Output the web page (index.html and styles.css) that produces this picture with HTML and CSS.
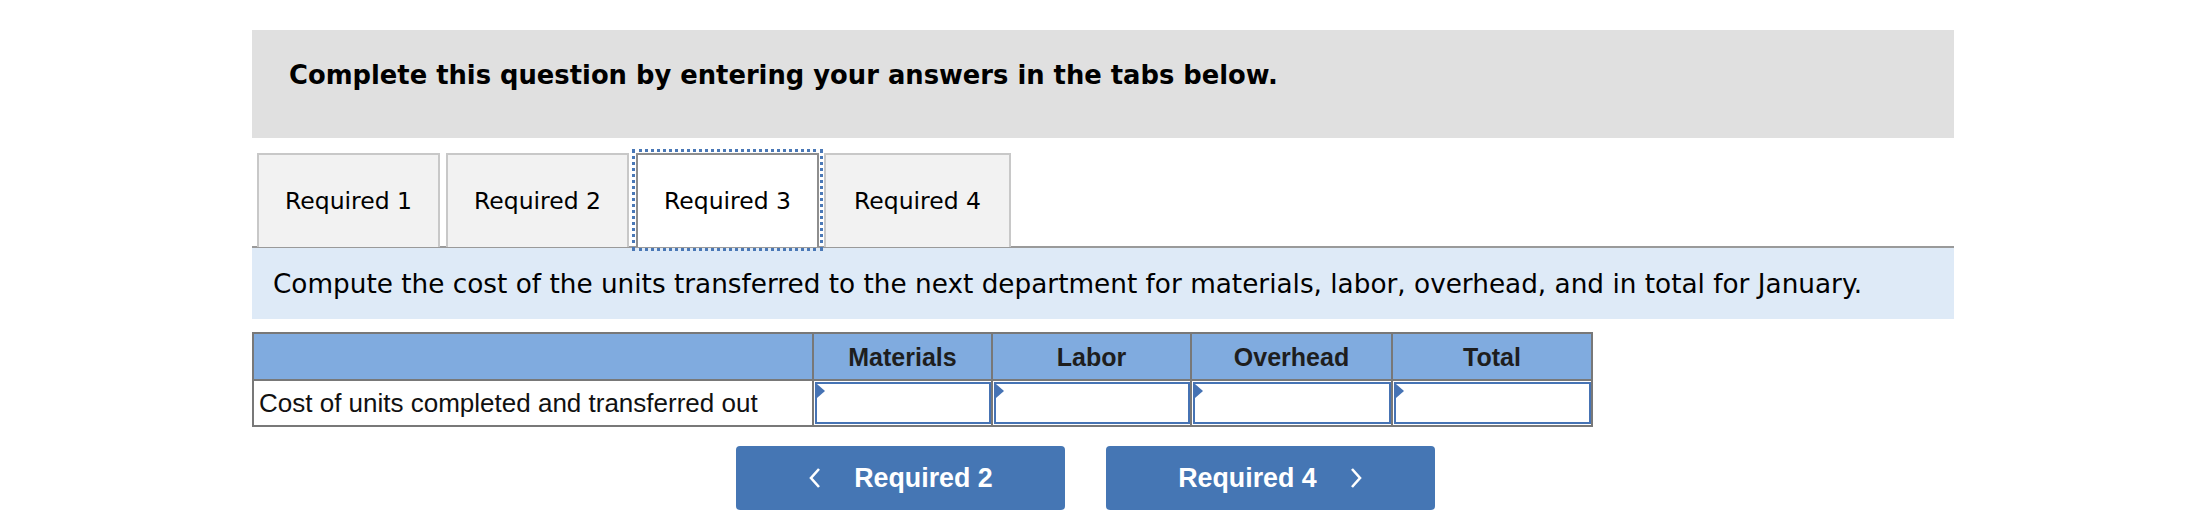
FILE: index.html
```html
<!DOCTYPE html>
<html>
<head>
<meta charset="utf-8">
<link rel="stylesheet" href="styles.css">
</head>
<body>
<div class="wrap">
  <div class="banner">
    <h1 class="banner-title">Complete this question by entering your answers in the tabs below.</h1>
  </div>
  <div class="tabs">
    <div class="tab">Required 1</div>
    <div class="tab">Required 2</div>
    <div class="tab active">Required 3</div>
    <div class="tab last">Required 4</div>
  </div>
  <div class="prompt">Compute the cost of the units transferred to the next department for materials, labor, overhead, and in total for January.</div>
  <table class="grid">
    <colgroup>
      <col class="c-label"><col class="c-mat"><col class="c-lab"><col class="c-ovh"><col class="c-tot">
    </colgroup>
    <thead>
      <tr class="head">
        <th></th>
        <th>Materials</th>
        <th>Labor</th>
        <th>Overhead</th>
        <th>Total</th>
      </tr>
    </thead>
    <tbody>
      <tr class="row">
        <td class="label">Cost of units completed and transferred out</td>
        <td class="cell"><div class="input"></div></td>
        <td class="cell"><div class="input"></div></td>
        <td class="cell"><div class="input"></div></td>
        <td class="cell"><div class="input"></div></td>
      </tr>
    </tbody>
  </table>
  <div class="nav">
    <div class="btn">
      <svg class="chev" width="14" height="22" viewBox="0 0 14 22"><polyline points="11,2 3,11 11,20" fill="none" stroke="#fff" stroke-width="2.6"/></svg>
      <span>Required 2</span>
    </div>
    <div class="btn">
      <span>Required 4</span>
      <svg class="chev" width="14" height="22" viewBox="0 0 14 22"><polyline points="3,2 11,11 3,20" fill="none" stroke="#fff" stroke-width="2.6"/></svg>
    </div>
  </div>
</div>
</body>
</html>
```
FILE: styles.css
```css
html, body { margin: 0; padding: 0; background: #fff; }
body { font-family: "DejaVu Sans", Verdana, sans-serif; color: #000; }
.wrap { margin-left: 252px; width: 1702px; padding-top: 30px; }
.banner { background: #e0e0e0; height: 108px; box-sizing: border-box; padding: 30px 0 0 37px; }
.banner-title { margin: 0; font-size: 25.8px; font-weight: bold; line-height: 30px; }
.tabs { display: flex; gap: 6px; margin-top: 15px; padding-left: 5px; border-bottom: 2px solid #9a9a9a; }
.tab { height: 94px; box-sizing: border-box; border: 2px solid #c8c8c8; border-bottom: none; background: #f2f2f2; padding: 0 26px; display: flex; align-items: center; font-size: 23.5px; margin-bottom: -1px; }
.tab.active { background: #fff; border-color: #8e8e8e; outline: 3px dotted #4a78b6; outline-offset: 1px; margin-left: 1px; margin-right: -1px; }
.tab.last { padding-left: 28px; padding-right: 28px; }
.prompt { background: #deeaf7; height: 71px; display: flex; align-items: center; padding-left: 21px; font-size: 26.3px; }
.grid { margin-top: 13px; width: 1340px; border-collapse: collapse; table-layout: fixed; font-family: "Liberation Sans", Arial, sans-serif; }
.c-label { width: 560px; } .c-mat { width: 179px; } .c-lab { width: 199px; } .c-ovh { width: 201px; } .c-tot { width: 200px; }
.grid th, .grid td { border: 2px solid #787878; padding: 0; }
.head th { background: #80abdf; height: 45px; font-size: 25px; font-weight: bold; color: #1e1e1e; text-align: center; line-height: 24px; }
.row td { height: 43px; }
.label { font-size: 26px; padding-left: 5px !important; color: #111; white-space: nowrap; line-height: 26px; }
.cell { padding: 1px 0 0 1px !important; vertical-align: top; }
.input { position: relative; height: 42px; box-sizing: border-box; border: 2px solid #4673b4; background: #fff; }
.input::before { content: ""; position: absolute; left: 0; top: 0; border-left: 8px solid #4673b4; border-top: 7px solid transparent; border-bottom: 7px solid transparent; }
.nav { display: flex; gap: 41px; margin-top: 19px; padding-left: 484px; }
.btn { width: 329px; height: 64px; background: #4576b4; border-radius: 4px; display: flex; align-items: center; justify-content: center; gap: 32px; color: #fff; font-family: "Liberation Sans", Arial, sans-serif; font-weight: bold; font-size: 26.8px; }
.chev { display: block; }
```
